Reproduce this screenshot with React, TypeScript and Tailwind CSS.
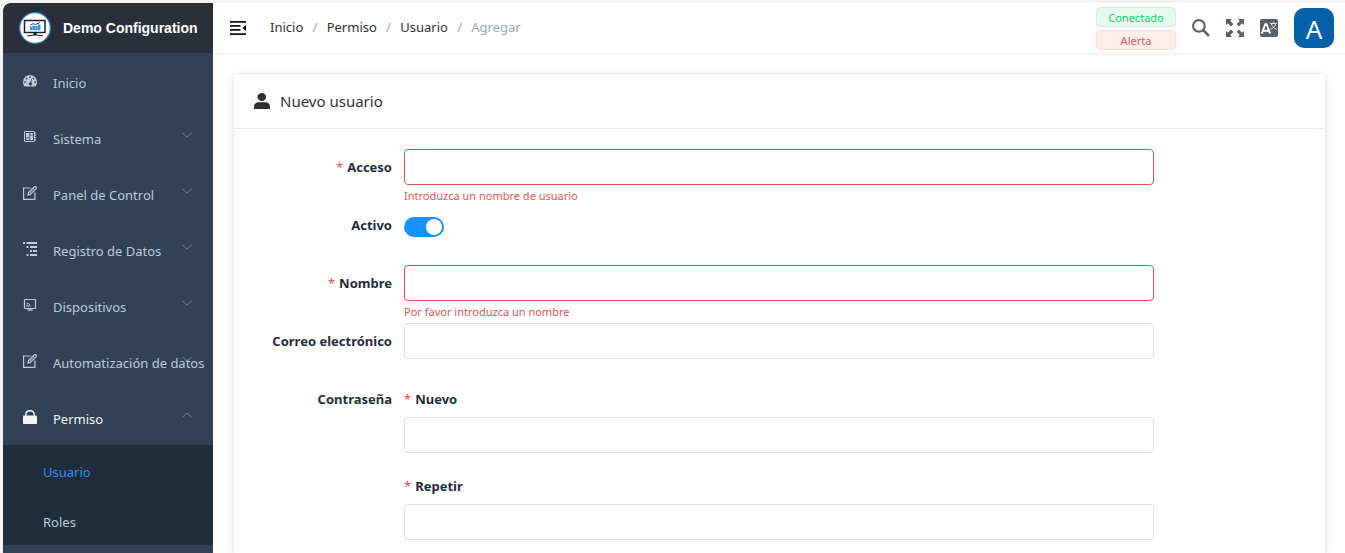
import { useState, type ReactNode } from 'react';

type IconProps = { className?: string };

function LogoIcon() {
  return (
    <svg viewBox="0 0 32 32" className="size-8 shrink-0" aria-hidden="true">
      <circle cx="16" cy="16" r="15.3" fill="#fff" stroke="#2f86cf" strokeWidth="1.2" />
      <rect x="5.500" y="8.500" width="20.500" height="12" fill="#fff" stroke="#17242c" strokeWidth="1.500" />
      <path d="M11 18.200v-3.700h2.300V18.200zM13.600 18.200v-4.400h2.300v4.400zM16.200 18.200v-4.200h2.300V18.200zM18.800 18.200v-5.700h2.600V18.200z" fill="#3b8fe0" />
      <path d="M11 13.300l3-1.600 2.500 0.800 4.500-2" fill="none" stroke="#33506a" strokeWidth="1" />
      <path d="M14.500 20.500h3v2.500h-3z" fill="#17242c" />
      <path d="M8 23.800q8-1.600 16 0" fill="none" stroke="#17242c" strokeWidth="1" />
    </svg>
  );
}

function DashboardIcon({ className }: IconProps) {
  return (
    <svg viewBox="0 0 14 14" className={className} fill="currentColor" aria-hidden="true">
      <path
        fillRule="evenodd"
        d="M7 1a7 7 0 0 0-7 7c0 1.500.4 2.900 1.100 4 .1.300.4.400.7.400h10.400c.3 0 .6-.1.700-.4.7-1.100 1.100-2.500 1.100-4a7 7 0 0 0-7-7zM7 2.200a.9.900 0 1 1 0 1.800.9.900 0 0 1 0-1.800zM3.500 3.700a.9.900 0 1 1 0 1.800.9.900 0 0 1 0-1.800zM2 7.200A.9.900 0 1 1 2 9a.9.900 0 0 1 0-1.800zM12 7.200A.9.900 0 1 1 12 9a.9.900 0 0 1 0-1.800zM10.500 3.700a.9.900 0 1 1 0 1.800.9.900 0 0 1 0-1.800zM8.300 4.900l.8.200-.9 3.500a1.500 1.500 0 1 1-.9-.2z"
      />
    </svg>
  );
}

function SystemIcon({ className }: IconProps) {
  return (
    <svg viewBox="0 0 14 14" className={className} fill="none" stroke="currentColor" aria-hidden="true">
      <rect x="1.500" y="1.500" width="10" height="10" rx="0.500" strokeWidth="1" />
      <path d="M3 3h3.400v4.500H3zM3 8.200h3.400V10H3zM7.100 3H10v1.700H7.100zM7.100 5.400H10V10H7.100z" fill="currentColor" stroke="none" />
      <path d="M12.500 2.500v1.200M12.500 4.800V6M12.500 7v1.200M12.500 9.300v1.200" strokeWidth="1" />
    </svg>
  );
}

function EditIcon({ className }: IconProps) {
  return (
    <svg viewBox="0 0 14 14" className={className} fill="none" stroke="currentColor" strokeWidth="1.200" aria-hidden="true">
      <path d="M7.500 2H.6v11.300h11.300V6.500" />
      <path d="M5 9.100l.5-2.500L11.400.8c.9-.7 2.600.7 1.800 1.800L7.400 8.500z" />
      <path d="M10.300 2l1.700 1.700M6.300 7.500l4.300-4.300" strokeWidth="0.700" />
    </svg>
  );
}

function TreeIcon({ className }: IconProps) {
  return (
    <svg viewBox="0 0 14 14" className={className} fill="currentColor" aria-hidden="true">
      <path d="M0 0h2v2H0zM3.500 0H14v2H3.500zM3.500 4h2v2h-2zM7 4h7v2H7zM7 8h2v2H7zM10 8h4v2h-4zM3.500 12h2v2h-2zM7 12h7v2H7z" />
    </svg>
  );
}

function DeviceIcon({ className }: IconProps) {
  return (
    <svg viewBox="0 0 14 14" className={className} fill="none" stroke="currentColor" aria-hidden="true">
      <rect x="1.500" y="1.500" width="11" height="9" rx="0.500" strokeWidth="1.200" />
      <path d="M4.500 12h5" strokeWidth="1.400" />
      <path d="M3.500 5a3.800 3.800 0 0 1 3.700 3.800M3.500 6.800a2 2 0 0 1 2 2" strokeWidth="0.900" />
      <circle cx="4" cy="8.300" r="0.600" fill="currentColor" stroke="none" />
    </svg>
  );
}

function LockIcon({ className }: IconProps) {
  return (
    <svg viewBox="0 0 14 14" className={className} aria-hidden="true">
      <path d="M2.800 6V4.700C2.800 2.300 4.500.7 7 .7s4.200 1.600 4.200 4V6" fill="none" stroke="currentColor" strokeWidth="1.400" />
      <rect x="0" y="5.500" width="14" height="8.500" rx="0.800" fill="currentColor" />
    </svg>
  );
}

function Chevron({ up }: { up?: boolean }) {
  return (
    <svg viewBox="0 0 12 12" className="absolute top-5 right-5 size-3" fill="none" stroke="#808d99" aria-hidden="true">
      <path d={up ? 'M1.500 8.200L6 3.900l4.500 4.300' : 'M1.500 3.900L6 8.200l4.500-4.300'} />
    </svg>
  );
}

function FoldIcon() {
  return (
    <svg viewBox="0 0 16 14" className="h-3.5 w-4" fill="#111" aria-hidden="true">
      <path d="M0 0h16v1.700H0zM0 4h10.500v1.700H0zM0 8h10.500v1.700H0zM0 12.200h16v1.800H0zM16 3.700v6.400l-3.700-3.200z" />
    </svg>
  );
}

function SearchIcon() {
  return (
    <svg viewBox="0 0 18 18" className="size-[18px]" fill="none" stroke="#5a5e66" aria-hidden="true">
      <circle cx="6.900" cy="6.900" r="5.800" strokeWidth="2.100" />
      <path d="M11.200 11.200l5.800 5.800" strokeWidth="2.600" />
    </svg>
  );
}

function ExpandIcon() {
  return (
    <svg viewBox="0 0 18 18" className="size-[18px]" fill="#5a5e66" aria-hidden="true">
      <path d="M0 0h6L4.200 1.900l3.200 3.200-2.300 2.300-3.200-3.200L0 6zM18 0v6l-1.900-1.800-3.200 3.200-2.300-2.300 3.200-3.200L12 0zM0 18v-6l1.900 1.800 3.200-3.200 2.300 2.300-3.200 3.200L6 18zM18 18h-6l1.800-1.900-3.200-3.200 2.300-2.300 3.200 3.200L18 12z" />
    </svg>
  );
}

function LanguageIcon() {
  return (
    <svg viewBox="0 0 18 18" className="size-[18px]" aria-hidden="true">
      <rect width="18" height="18" rx="2" fill="#5a5e66" />
      <path d="M1.800 14.700L5.300 5.200h1.300l3.500 9.500M3.300 11.800h5.300" fill="none" stroke="#fff" strokeWidth="1.900" />
      <path d="M10 4.500h7M13.500 2.500v2M11.300 4.700c.8 3 2.800 4.700 5.400 5.700M15.700 4.700c-.8 3-2.800 4.700-5.400 5.700" fill="none" stroke="#fff" strokeWidth="0.800" />
    </svg>
  );
}

function UserIcon() {
  return (
    <svg viewBox="0 0 16 16" className="size-4" fill="#303133" aria-hidden="true">
      <ellipse cx="7.800" cy="4" rx="4.300" ry="4" />
      <path d="M0 16v-2.500C0 11 2 9.300 4.500 9.300h7C14 9.300 16 11 16 13.500V16z" />
    </svg>
  );
}

const menu = [
  { label: 'Inicio', Icon: DashboardIcon, nested: false },
  { label: 'Sistema', Icon: SystemIcon, nested: true },
  { label: 'Panel de Control', Icon: EditIcon, nested: true },
  { label: 'Registro de Datos', Icon: TreeIcon, nested: true },
  { label: 'Dispositivos', Icon: DeviceIcon, nested: true },
  { label: 'Automatización de datos', Icon: EditIcon, nested: true },
];

const itemClass = 'relative flex h-14 w-full items-center pt-1.5 pl-5 text-left text-[13px] whitespace-nowrap';
const iconClass = 'mr-4 mb-1.5 size-3.5 shrink-0';

function Sidebar() {
  const [open, setOpen] = useState(true);
  return (
    <aside className="w-[210px] shrink-0 overflow-hidden rounded-tl-lg bg-[#304156] text-[#bfcbd9]">
      <a href="#" className="flex h-[50px] items-center gap-3 bg-[#2b2f3a] pl-4">
        <LogoIcon />
        <h1 className="font-['Liberation_Sans',Arial,sans-serif] text-sm font-bold whitespace-nowrap text-white">
          Demo Configuration
        </h1>
      </a>
      <nav>
        {menu.map(({ label, Icon, nested }) =>
          nested ? (
            <button key={label} type="button" className={itemClass}>
              <Icon className={iconClass} />
              {label}
              <Chevron />
            </button>
          ) : (
            <a key={label} href="#" className={itemClass}>
              <Icon className={iconClass} />
              {label}
            </a>
          ),
        )}
        <button
          type="button"
          aria-expanded={open}
          onClick={() => setOpen(!open)}
          className="relative flex h-14 w-full items-center pt-1.5 pl-5 text-left text-[13px] whitespace-nowrap text-[#f4f4f5]"
        >
          <LockIcon className={iconClass} />
          Permiso
          <Chevron up={open} />
        </button>
        {open && (
          <div className="bg-[#1f2d3d]">
            <a href="#" className="flex h-[50px] items-center pt-1.5 pl-10 text-[13px] text-[#2f8ff0]">Usuario</a>
            <a href="#" className="flex h-[50px] items-center pt-1.5 pl-10 text-[13px]">Roles</a>
          </div>
        )}
      </nav>
    </aside>
  );
}

function Header() {
  const crumbs = ['Inicio', 'Permiso', 'Usuario'];
  return (
    <header className="flex h-[50px] items-center bg-white pr-[11px] pl-[17px] shadow-[0_1px_4px_rgba(0,21,41,0.08)]">
      <button type="button" aria-label="Contraer menú" className="mr-6">
        <FoldIcon />
      </button>
      <nav aria-label="Ruta" className="flex items-center text-[13px] text-[#303133]">
        {crumbs.map((c) => (
          <span key={c} className="flex">
            <a href="#">{c}</a>
            <span className="mx-[9px] font-bold text-[#c0c4cc]">/</span>
          </span>
        ))}
        <span className="text-[#97a8be]">Agregar</span>
      </nav>
      <div className="ml-auto flex items-center">
        <div className="mr-4 flex w-20 flex-col gap-[3px] text-center text-[11px]">
          <span className="h-5 rounded border border-[#d0f5e0] bg-[#e7faf0] leading-[19px] text-[#13ce66]">Conectado</span>
          <span className="h-5 rounded border border-[#ffdbdb] bg-[#ffeded] leading-[19px] text-[#e65252]">Alerta</span>
        </div>
        <div className="flex items-center gap-4">
          <button type="button" aria-label="Buscar"><SearchIcon /></button>
          <button type="button" aria-label="Pantalla completa"><ExpandIcon /></button>
          <button type="button" aria-label="Idioma"><LanguageIcon /></button>
          <button type="button" className="size-10 rounded-[10px] bg-[#0460a9] pt-0.5 text-[26px] leading-none text-white">A</button>
        </div>
      </div>
    </header>
  );
}

function Star() {
  return <span className="mr-1 font-normal text-[#f04b4b]">*</span>;
}

type RowProps = { label: string; id: string; required?: boolean; error?: string; children: ReactNode };

function Row({ label, id, required, error, children }: RowProps) {
  return (
    <div className="flex min-h-[58px]">
      <label htmlFor={id} className="w-[150px] shrink-0 pr-3 text-right text-[13px] leading-9 font-bold whitespace-nowrap text-[#1f2d3d]">
        {required && <Star />}
        {label}
      </label>
      <div className="min-w-0 flex-1">
        {children}
        {error && <p className="pt-[3px] text-[11px] leading-4 text-[#e65252]">{error}</p>}
      </div>
    </div>
  );
}

const inputClass = 'block h-9 w-full rounded border border-[#dcdfe6] bg-white px-4 text-[13px] outline-none';
const errorInputClass = 'block h-9 w-full rounded border border-[#d9534f] bg-white px-4 text-[13px] outline-none';
const stackedLabelClass = 'block text-[13px] leading-9 font-bold text-[#1f2d3d]';

function UserForm() {
  return (
    <form className="mr-[151px] px-5 pt-5">
      <Row label="Acceso" id="login" required error="Introduzca un nombre de usuario">
        <input id="login" className={errorInputClass} />
      </Row>
      <Row label="Activo" id="active">
        <div className="flex h-10 items-center">
          <span className="relative flex h-5 w-10">
            <input id="active" type="checkbox" role="switch" defaultChecked className="peer h-5 w-10 appearance-none rounded-full bg-[#c0ccda] checked:bg-[#1890ff]" />
            <span className="pointer-events-none absolute top-0.5 left-0.5 size-4 rounded-full bg-white peer-checked:left-[22px]" />
          </span>
        </div>
      </Row>
      <Row label="Nombre" id="name" required error="Por favor introduzca un nombre">
        <input id="name" className={errorInputClass} />
      </Row>
      <Row label="Correo electrónico" id="email">
        <input id="email" type="email" className={inputClass} />
      </Row>
      <Row label="Contraseña" id="password">
        <div className="mb-[15px]">
          <label htmlFor="password" className={stackedLabelClass}><Star />Nuevo</label>
          <input id="password" type="password" className={inputClass} />
        </div>
        <div className="mb-[15px]">
          <label htmlFor="repeat" className={stackedLabelClass}><Star />Repetir</label>
          <input id="repeat" type="password" className={inputClass} />
        </div>
      </Row>
    </form>
  );
}

export default function App() {
  return (
    <div className="h-screen overflow-hidden bg-[#f3f3f3] pt-[3px] pl-[3px] font-['Noto_Sans',sans-serif]">
      <div className="flex h-full overflow-hidden rounded-tl-lg bg-white">
        <Sidebar />
        <main className="min-w-0 flex-1">
          <Header />
          <div className="p-5 pr-[19px]">
            <section className="rounded border border-[#e6ebf5] bg-white shadow-[0_2px_12px_rgba(0,0,0,0.1)]">
              <header className="flex h-[55px] items-center gap-2.5 border-b border-[#e6ebf5] px-5 text-[#303133]">
                <UserIcon />
                <h2 className="text-[15px]">Nuevo usuario</h2>
              </header>
              <UserForm />
            </section>
          </div>
        </main>
      </div>
    </div>
  );
}
